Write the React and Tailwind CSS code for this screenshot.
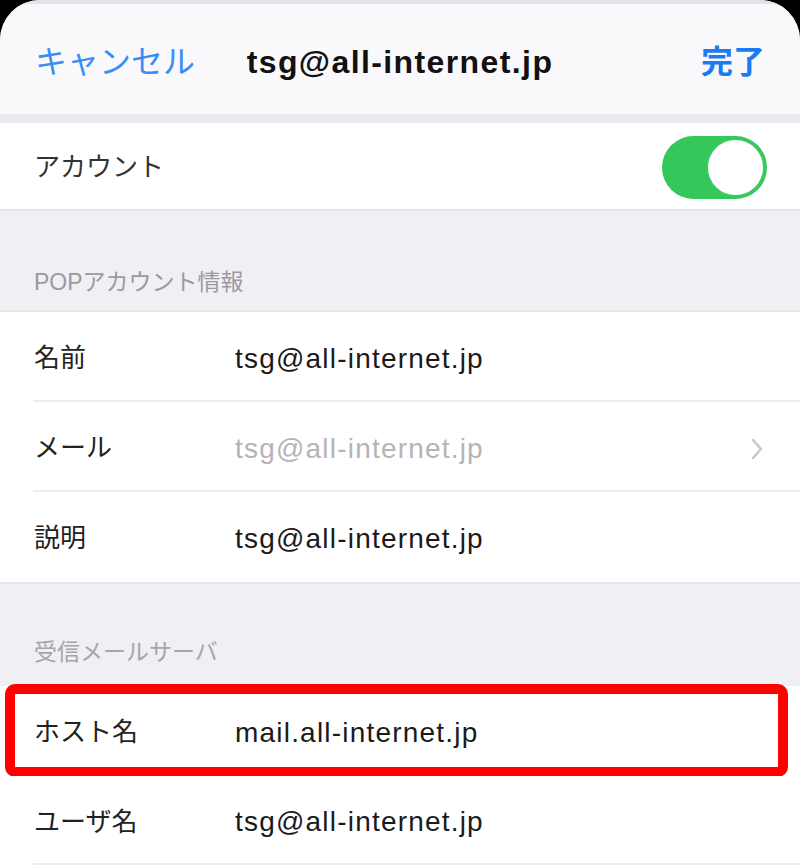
import React from "react";

const font = { fontFamily: '"Liberation Sans", "Noto Sans CJK JP", sans-serif' };

function Row({ label, value, muted, chevron, divider = true }) {
  return (
    <div className="relative h-[90px] bg-white flex items-center pl-[34px] pr-[34px] pt-[4px]">
      <div className="w-[201px] text-[26px] text-[#222]">{label}</div>
      <div className={"flex-1 text-[28px] tracking-[1.2px] " + (muted ? "text-[#b4b4b8]" : "text-[#1a1a1a]")}>{value}</div>
      {chevron && (
        <svg width="14" height="24" viewBox="0 0 14 24" className="mr-[2px]">
          <path d="M3 3 L11 12 L3 21" fill="none" stroke="#c7c7cc" strokeWidth="2.5" strokeLinecap="round" strokeLinejoin="round" />
        </svg>
      )}
      {divider && <div className="absolute bottom-0 left-[33px] right-0 h-[2px] bg-[#ececef]" />}
    </div>
  );
}

export default function App() {
  return (
    <div className="w-[800px] h-[865px] bg-black overflow-hidden" style={font}>
      <div className="h-full rounded-t-[40px] bg-[#efeff4] overflow-hidden flex flex-col">
        <div className="h-[4px] bg-[#e4e4e8]" />
        <div className="h-[111px] bg-[#f9f9fb] grid grid-cols-[1fr_auto_1fr] items-center pl-[35px] pr-[35px] pt-[6px]">
          <span className="justify-self-start text-[32px] text-[#3b8cf5]">キャンセル</span>
          <span className="text-[32px] font-bold text-[#111] tracking-[1.4px]">tsg@all-internet.jp</span>
          <span className="justify-self-end text-[32px] font-bold text-[#1a7cf5]">完了</span>
        </div>
        <div className="h-[9px] bg-[#e9e9ee]" />
        <div className="h-[89px] bg-white flex items-center justify-between pl-[34px] pr-[33px] pt-[3px] border-b-2 border-[#e6e6ea]">
          <span className="text-[26px] text-[#333]">アカウント</span>
          <div className="w-[105px] h-[63px] rounded-full bg-[#34c759] flex items-center justify-end pr-[2px]">
            <div className="w-[59px] h-[59px] rounded-full bg-white border-2 border-[#3cc95f]" />
          </div>
        </div>
        <div className="h-[99px] flex items-end pl-[34px] pb-[10px]">
          <span className="text-[23px] text-[#9a9aa0]">POPアカウント情報</span>
        </div>
        <div className="border-t-2 border-[#e6e6ea]">
          <Row label="名前" value="tsg@all-internet.jp" />
          <Row label="メール" value="tsg@all-internet.jp" muted chevron />
          <Row label="説明" value="tsg@all-internet.jp" divider={false} />
        </div>
        <div className="h-[105px] border-t-2 border-[#e6e6ea] flex items-end pl-[34px] pb-[16px]">
          <span className="text-[23px] text-[#a5a5aa]">受信メールサーバ</span>
        </div>
        <div className="relative">
          <Row label="ホスト名" value="mail.all-internet.jp" divider={false} />
          <div className="absolute left-[5px] top-[-2px] w-[783px] h-[93px] border-[10px] border-[#ff0000] rounded-[10px]" />
        </div>
        <Row label="ユーザ名" value="tsg@all-internet.jp" />
      </div>
    </div>
  );
}
